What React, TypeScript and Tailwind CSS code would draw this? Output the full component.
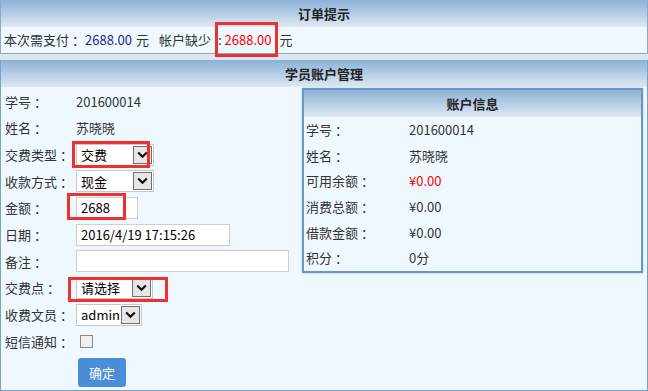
const headStyle = "h-[27px] flex items-center justify-center font-bold text-[13px] text-[#222] bg-linear-to-b from-[#8bb1d7] to-[#e0e8f1]"

// full-width colon sits a bit to the right in the original font
const Colon = () => <span className="ml-[3px]">：</span>

const Chevron = () => (
    <svg width="11" height="8" viewBox="0 0 11 8" fill="none">
        <path d="M1.2 1.5 L5.5 5.8 L9.8 1.5" stroke="#111" strokeWidth="2.2" />
    </svg>
)

const FakeSelect = ({ text, width }: { text: string; width: string }) => (
    <div className={`h-[22px] ${width} flex items-center border border-[#c8c8c8] bg-white`}>
        <span className="flex-1 pl-[4px] text-[13px] text-black truncate">{text}</span>
        <div className="w-[19px] h-[18px] mr-[1px] flex items-center justify-center border border-[#707070] bg-[#e6e6e6]">
            <Chevron />
        </div>
    </div>
)

const FakeInput = ({ text, width }: { text: string; width: string }) => (
    <div className={`h-[22px] ${width} flex items-center border border-[#cfcfcf] bg-white pl-[4px] text-[13px] text-black`}>
        {text}
    </div>
)

const FormRow = ({ label, children }: { label: string; children: React.ReactNode }) => (
    <div className="h-[26.7px] flex items-center">
        <div className="w-[75px] pl-[4px] shrink-0">{label}<Colon /></div>
        <div className="flex items-center">{children}</div>
    </div>
)

const accountRows = [
    { label: "学号", value: "201600014", red: false },
    { label: "姓名", value: "苏晓晓", red: false },
    { label: "可用余额", value: "¥0.00", red: true },
    { label: "消费总额", value: "¥0.00", red: false },
    { label: "借款金额", value: "¥0.00", red: false },
    { label: "积分", value: "0分", red: false },
]

export default function App() {
    return (
        <div className="w-[648px] h-[391px] overflow-hidden bg-[#f0f8ff] text-[13px] text-[#333] font-['Noto_Sans_CJK_SC',sans-serif] flex flex-col">

            {/* 订单提示 */}
            <div className="relative h-[54px] border border-[#89aacb] border-t-0 flex flex-col">
                <div className={headStyle}>订单提示</div>
                <div className="flex-1 flex items-center pl-[3px] bg-[#f0f8ff]">
                    <span>本次需支付</span><Colon />
                    <span className="text-[#1f1f8f]">2688.00</span>
                    <span className="ml-[4px]">元</span>
                    <span className="ml-[10px]">帐户缺少</span>
                    <span className="ml-[7px] mr-[3px]">:</span>
                    <span className="text-[#ff0000]">2688.00</span>
                    <span className="ml-[8px]">元</span>
                </div>
                <div className="absolute left-[214px] top-[22px] w-[63px] h-[35px] border-[3px] border-[#ee3030]"></div>
            </div>

            <div className="h-[6px] bg-[#dce6ef]"></div>

            {/* 学员账户管理 */}
            <div className="relative flex-1 flex flex-col border border-[#7aa2c8] border-t-0">
                <div className={headStyle}>学员账户管理</div>

                <div className="flex-1 flex">
                    <div className="w-[298px] flex flex-col pt-[1px]">
                        <FormRow label="学号"><span>201600014</span></FormRow>
                        <FormRow label="姓名"><span>苏晓晓</span></FormRow>
                        <FormRow label="交费类型"><FakeSelect text="交费" width="w-[78px]" /></FormRow>
                        <FormRow label="收款方式"><FakeSelect text="现金" width="w-[78px]" /></FormRow>
                        <FormRow label="金额"><FakeInput text="2688" width="w-[62px]" /></FormRow>
                        <FormRow label="日期"><FakeInput text="2016/4/19 17:15:26" width="w-[154px]" /></FormRow>
                        <FormRow label="备注"><FakeInput text="" width="w-[213px]" /></FormRow>
                        <FormRow label="交费点"><FakeSelect text="请选择" width="w-[77px]" /></FormRow>
                        <FormRow label="收费文员"><FakeSelect text="admin" width="w-[66px]" /></FormRow>
                        <FormRow label="短信通知">
                            <div className="ml-[4px] w-[13px] h-[13px] border border-[#8a8a8a] bg-[#f0f0f0]"></div>
                        </FormRow>
                        <div className="pl-[77px] pt-[3px]">
                            <button className="w-[48px] h-[29px] rounded-[3px] bg-[#4a8ed8] text-white text-[13px]">确定</button>
                        </div>
                    </div>

                    <div className="mt-[1px] ml-[3px] w-[341px] h-[185px] border-2 border-[#6a96c4] shadow-[0_0_2px_#a9c6e2] flex flex-col">
                        <div className={headStyle}>账户信息</div>
                        {accountRows.map(item => (
                            <div key={item.label} className="h-[26px] flex items-center">
                                <div className="w-[105px] pl-[2px]">{item.label}<Colon /></div>
                                <div className={item.red ? "text-[#ff0000]" : ""}>{item.value}</div>
                            </div>
                        ))}
                    </div>
                </div>

                <div className="absolute left-[71px] top-[81px] w-[78px] h-[27px] border-[3px] border-[#ee3030]"></div>
                <div className="absolute left-[66px] top-[133px] w-[59px] h-[27px] border-[3px] border-[#ee3030]"></div>
                <div className="absolute left-[67px] top-[217px] w-[100px] h-[25px] border-[3px] border-[#ee3030]"></div>
            </div>

        </div>
    )
}
